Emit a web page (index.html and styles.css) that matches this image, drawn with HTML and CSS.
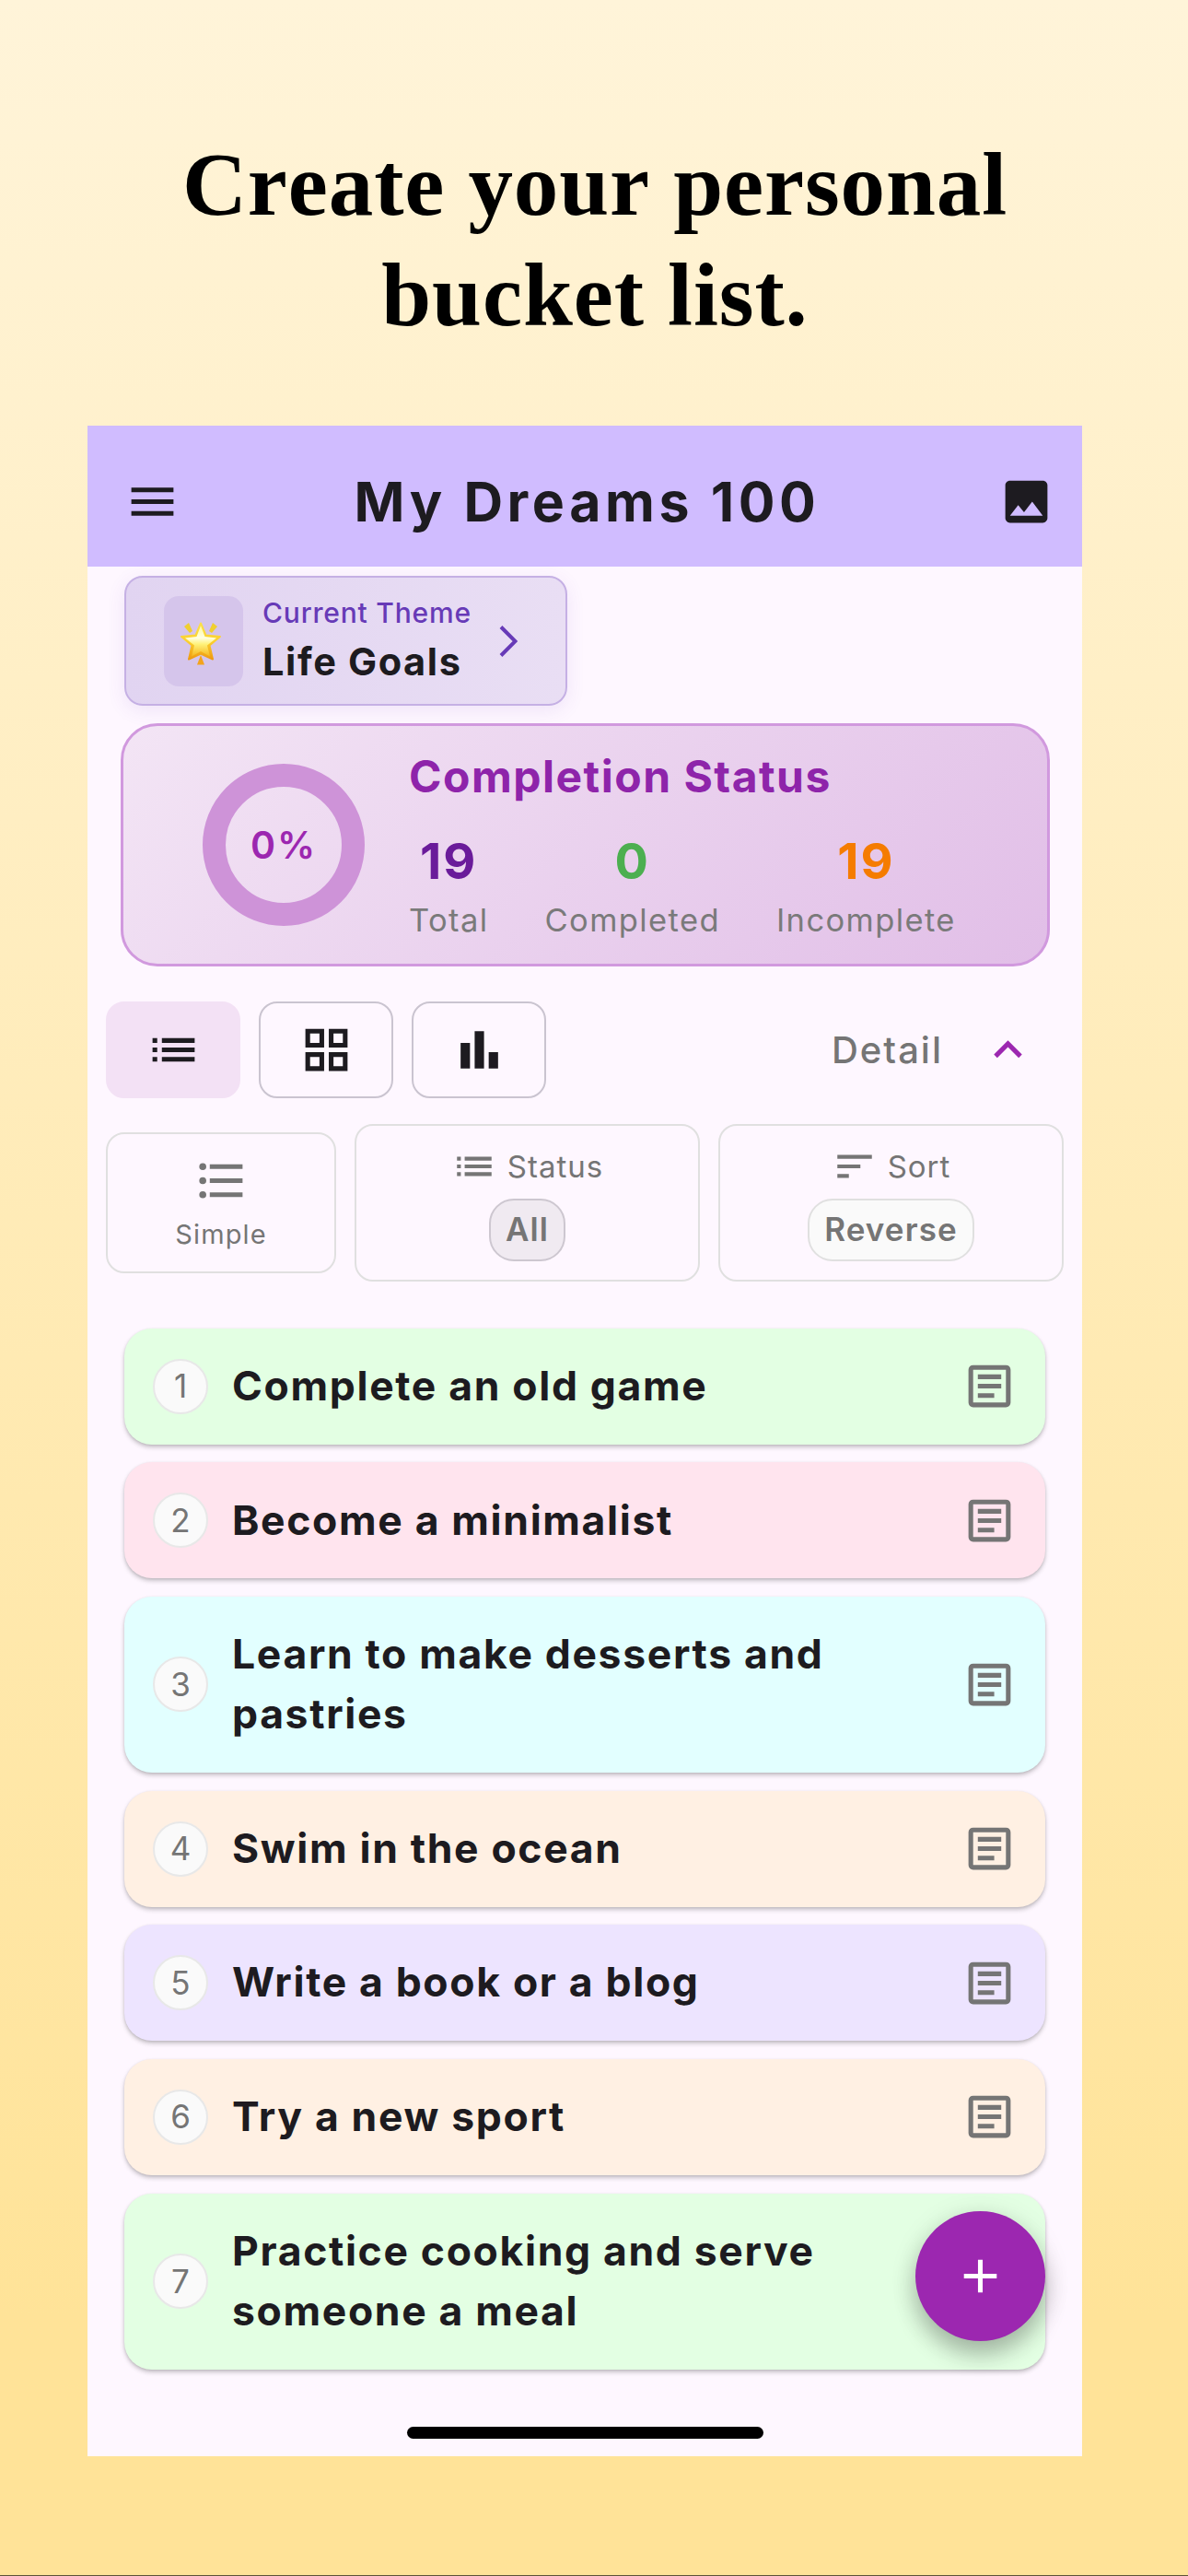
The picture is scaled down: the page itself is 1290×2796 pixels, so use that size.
FILE: index.html
```html
<!DOCTYPE html>
<html lang="en">
<head>
<meta charset="utf-8">
<title>My Dreams 100</title>
<link rel="stylesheet" href="styles.css">
</head>
<body>
<svg class="defs" aria-hidden="true">
  <symbol id="list" viewBox="0 0 24 24"><path d="M3 13h2v-2H3v2zm0 4h2v-2H3v2zm0-8h2V7H3v2zm4 4h14v-2H7v2zm0 4h14v-2H7v2zM7 7v2h14V7H7z"/></symbol>
  <symbol id="note" viewBox="0 0 24 24"><path fill-rule="evenodd" d="M5 3h14a2 2 0 0 1 2 2v14a2 2 0 0 1-2 2H5a2 2 0 0 1-2-2V5a2 2 0 0 1 2-2zm0 2v14h14V5zm2 2h10v2H7zm0 4h10v2H7zm0 4h7v2H7z"/></symbol>
</svg>
<main class="page">
  <h1 class="headline">Create your personal<br>bucket list.</h1>
  <section class="phone">
    <header class="appbar">
      <svg class="icon" viewBox="0 0 24 24"><path d="M3 18h18v-2H3v2zm0-5h18v-2H3v2zm0-7v2h18V6H3z"/></svg>
      <h2 class="title">My Dreams 100</h2>
      <svg class="icon" viewBox="0 0 24 24"><path d="M21 19V5c0-1.100-.9-2-2-2H5c-1.100 0-2 .9-2 2v14c0 1.100.9 2 2 2h14c1.100 0 2-.9 2-2zM8.500 13.500l2.500 3.010L14.500 12l4.500 6H5l3.500-4.500z"/></svg>
    </header>

    <div class="theme">
      <div class="theme-icon">
        <svg viewBox="0 0 44 47">
          <defs><linearGradient id="gold" x1="0" y1="0" x2="0" y2="1"><stop offset="0" stop-color="#fbe04a"/><stop offset=".5" stop-color="#fbd02f"/><stop offset="1" stop-color="#ee9a12"/></linearGradient>
          <linearGradient id="glow" x1="0" y1="0" x2="0" y2="1"><stop offset="0" stop-color="#fff9a0"/><stop offset=".4" stop-color="#ffffe0"/><stop offset=".6" stop-color="#fff27a"/><stop offset="1" stop-color="#f5b51c"/></linearGradient></defs>
          <path fill="#f0cf30" d="M4 5l5-4 4 9-3 2zM40 5l-5-4-4 9 3 2z"/>
          <path fill="#f3a31c" d="M22 36l4 10.500h-8z"/>
          <path fill="url(#gold)" stroke="url(#gold)" stroke-width="2" stroke-linejoin="round" d="M22 1.500l5.500 13 15.500 1.500-11.500 9.500 3.500 15L22 34.500 9 40.500l3.500-15L1 16l15.500-1.500z"/>
          <path fill="url(#glow)" d="M22 4l4.500 12 12.500 1.500-10 8 3 12L22 32l-10 5.500 3-12-10-8L17.500 16z"/>
        </svg>
      </div>
      <div class="theme-text"><span class="theme-label">Current Theme</span><span class="theme-name">Life Goals</span></div>
      <svg class="chevron" viewBox="0 0 20 34"><path d="M2 1.500L17.500 17 2 32.500"/></svg>
    </div>

    <div class="status">
      <div class="ring">0%</div>
      <div class="summary">
        <h3>Completion Status</h3>
        <div class="stats">
          <div class="stat total"><b>19</b><span>Total</span></div>
          <div class="stat done"><b>0</b><span>Completed</span></div>
          <div class="stat open"><b>19</b><span>Incomplete</span></div>
        </div>
      </div>
    </div>

    <div class="views">
      <div class="view active"><svg class="icon"><use href="#list"/></svg></div>
      <div class="view"><svg class="icon" viewBox="0 0 24 24"><path fill-rule="evenodd" d="M3 3v8h8V3H3zm6 6H5V5h4v4zm-6 4v8h8v-8H3zm6 6H5v-4h4v4zm4-16v8h8V3h-8zm6 6h-4V5h4v4zm-6 4v8h8v-8h-8zm6 6h-4v-4h4v4z"/></svg></div>
      <div class="view"><svg class="icon" viewBox="0 0 24 24"><path d="M4 9h4v11H4zM16 13h4v7h-4zM10 4h4v16h-4z"/></svg></div>
      <div class="detail"><span>Detail</span><svg class="icon" viewBox="0 0 24 24"><path d="M12 8l-6 6 1.410 1.410L12 10.830l4.590 4.580L18 14z"/></svg></div>
    </div>

    <div class="filters">
      <div class="filter simple"><svg class="icon" viewBox="0 0 24 24"><path d="M4 10.500a1.500 1.500 0 1 0 0 3 1.500 1.500 0 0 0 0-3zm0-6a1.500 1.500 0 1 0 0 3 1.500 1.500 0 0 0 0-3zm0 12a1.500 1.500 0 1 0 0 3 1.500 1.500 0 0 0 0-3zM7 19h14v-2H7v2zm0-6h14v-2H7v2zm0-8v2h14V5H7z"/></svg><span>Simple</span></div>
      <div class="filter">
        <div class="filter-head"><svg class="icon small"><use href="#list"/></svg><span>Status</span></div>
        <div class="pill all">All</div>
      </div>
      <div class="filter">
        <div class="filter-head"><svg class="icon small" viewBox="0 0 24 24"><path d="M3 18h6v-2H3v2zM3 6v2h18V6H3zm0 7h12v-2H3v2z"/></svg><span>Sort</span></div>
        <div class="pill">Reverse</div>
      </div>
    </div>

    <ol class="dreams">
      <li class="dream green"><span class="num">1</span><p>Complete an old game</p><svg class="icon"><use href="#note"/></svg></li>
      <li class="dream pink"><span class="num">2</span><p>Become a minimalist</p><svg class="icon"><use href="#note"/></svg></li>
      <li class="dream cyan"><span class="num">3</span><p>Learn to make desserts and<br>pastries</p><svg class="icon"><use href="#note"/></svg></li>
      <li class="dream peach"><span class="num">4</span><p>Swim in the ocean</p><svg class="icon"><use href="#note"/></svg></li>
      <li class="dream violet"><span class="num">5</span><p>Write a book or a blog</p><svg class="icon"><use href="#note"/></svg></li>
      <li class="dream peach"><span class="num">6</span><p>Try a new sport</p><svg class="icon"><use href="#note"/></svg></li>
      <li class="dream green"><span class="num">7</span><p>Practice cooking and serve<br>someone a meal</p></li>
    </ol>

    <div class="fab"><svg class="icon" viewBox="0 0 24 24"><path d="M19 13h-6v6h-2v-6H5v-2h6V5h2v6h6v2z"/></svg></div>
    <div class="home"></div>
  </section>
</main>
</body>
</html>
```
FILE: styles.css
```css
* { box-sizing: border-box; margin: 0; padding: 0; }
body { width: 1290px; height: 2796px; overflow: hidden; font-family: Inter, "Liberation Sans", sans-serif; color: #1d1b20; }
.defs { position: absolute; width: 0; height: 0; }
.page { width: 1290px; height: 2796px; padding-left: 95px; background: linear-gradient(#fff4d9, #ffe398 90%); border-bottom: 1px solid #5c5338; }
.headline { width: 1102px; height: 462px; padding-top: 141px; font: 700 97px/120px "Liberation Serif", serif; letter-spacing: .9px; font-kerning: none; text-align: center; color: #000; }
.icon { display: block; width: 61px; height: 61px; fill: currentColor; flex: none; }
.small { width: 50px; height: 50px; }

.phone { position: relative; width: 1080px; height: 2204px; background: #fef7ff; }
.appbar { display: flex; align-items: center; justify-content: space-between; height: 153px; padding: 12px 30px 0 40px; background: #d0bcff; }
.title { margin-right: 5px; font-size: 59px; line-height: 70px; font-weight: 700; letter-spacing: 4.6px; }

.theme { display: flex; align-items: center; width: 481px; height: 141px; margin: 10px 0 0 40px; padding-left: 41px; border: 2px solid #c5b0e4; border-radius: 20px; background: linear-gradient(90deg, #e1d4f1, #e9def4); box-shadow: 0 5px 20px rgba(103, 58, 183, .1); }
.theme-icon { display: flex; align-items: center; justify-content: center; width: 86px; height: 98px; border-radius: 16px; background: #d5c5eb; }
.theme-icon svg { width: 44px; height: 47px; margin: 5px 6px 0 0; }
.theme-text { display: flex; flex-direction: column; width: 256px; margin: 0 1px 2px 21px; white-space: nowrap; }
.theme-label { font-size: 30px; line-height: 46px; font-weight: 500; letter-spacing: .8px; color: #673ab7; }
.theme-name { font-size: 41.5px; line-height: 60px; font-weight: 700; letter-spacing: 1.6px; }
.chevron { width: 20px; height: 34px; fill: none; stroke: #673ab7; stroke-width: 4; }

.status { display: flex; align-items: center; width: 1009px; height: 264px; margin: 19px 0 0 36px; padding-left: 86px; border: 3px solid #d199de; border-radius: 40px; background: linear-gradient(135deg, #f3e5f5, #e1bee7); }
.ring { display: grid; place-items: center; width: 176px; height: 176px; border: 25px solid #ce93d8; border-radius: 50%; font-size: 41px; font-weight: 600; letter-spacing: 2px; color: #9c27b0; }
.summary { margin-left: 48px; padding-top: 4px; }
.summary h3 { font-size: 48px; line-height: 60px; font-weight: 700; letter-spacing: 1.5px; color: #8e24aa; }
.stats { display: flex; gap: 61px; margin-top: 29px; }
.stat { display: flex; flex-direction: column; align-items: center; }
.stat b { font-size: 54px; line-height: 66px; font-weight: 700; letter-spacing: 2px; }
.stat span { margin-top: 5px; font-size: 34.5px; line-height: 52px; letter-spacing: 1.4px; color: #7a7a7a; }
.total b { color: #6a1b9a; }
.done b { color: #4caf50; }
.open b { color: #f57c00; }

.views { display: flex; align-items: center; gap: 20px; height: 105px; margin: 38px 50px 0 20px; }
.view { display: grid; place-items: center; width: 146px; height: 105px; border: 2px solid #cac4d0; border-radius: 20px; }
.active { border-color: #f3e1f5; background: #f3e1f5; }
.detail { display: flex; align-items: center; gap: 40px; margin-left: auto; font-size: 40px; font-weight: 500; letter-spacing: 2px; color: #757575; }
.detail .icon { color: #9c27b0; }

.filters { display: flex; align-items: center; gap: 20px; margin: 28px 0 0 20px; color: #757575; }
.filter { display: flex; flex-direction: column; align-items: center; width: 375px; height: 171px; padding-top: 19px; border: 2px solid #e0e0e0; border-radius: 20px; }
.simple { width: 250px; height: 153px; padding-top: 20px; }
.simple span { font-size: 29px; line-height: 36px; letter-spacing: 1.1px; margin-top: 10px; }
.filter-head { display: flex; align-items: center; gap: 11px; height: 50px; font-size: 33px; letter-spacing: 1px; }
.pill { display: grid; place-items: center; height: 68px; margin-top: 10px; padding: 0 16px 2px; border: 2px solid #e0e0e0; border-radius: 27px; background: #fafafa; font-size: 35px; font-weight: 600; letter-spacing: 1.1px; }
.all { border-color: #cdc7d0; background: #f0eaf1; }

.dreams { display: flex; flex-direction: column; gap: 19.670px; margin: 50.600px 40px 0; list-style: none; }
.dream { display: flex; align-items: center; min-height: 126px; padding: 30px 30px 30px 31px; border-radius: 30px; box-shadow: 0 3px 5px rgba(0, 0, 0, .2), 0 1px 3px rgba(0, 0, 0, .1); }
.dream p { flex: 1; margin-left: 26px; font-size: 44.500px; line-height: 65.500px; font-weight: 650; letter-spacing: 1.650px; white-space: nowrap; }
.dream .icon { color: #757575; }
.num { display: grid; place-items: center; width: 60px; height: 60px; padding-bottom: 1px; border: 2px solid #e8e8e8; border-radius: 50%; background: #fafafa; font-size: 35px; color: #757575; }
.green { background: #e3ffe3; }
.pink { background: #ffe4ee; }
.cyan { background: #e2ffff; }
.peach { background: #fff0e3; }
.violet { background: #ede4ff; }

.fab { position: absolute; right: 40px; bottom: 125px; display: grid; place-items: center; width: 141px; height: 141px; border-radius: 50%; background: #9c27b0; color: #fff; box-shadow: 0 15px 25px rgba(0, 0, 0, .24), 0 4px 30px rgba(0, 0, 0, .1); }
.home { position: absolute; left: 347px; bottom: 19px; width: 387px; height: 13px; border-radius: 7px; background: #000; }
```
